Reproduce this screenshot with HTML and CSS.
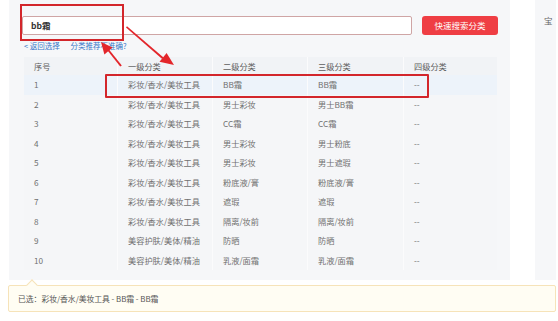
FILE: index.html
```html
<!DOCTYPE html>
<html lang="zh">
<head>
<meta charset="utf-8">
<link rel="stylesheet" href="styles.css">
</head>
<body>
<div class="page">
  <div class="top">
    <div class="main">
      <div class="search-row">
        <div class="search-input">bb霜</div>
        <div class="search-btn">快速搜索分类</div>
      </div>
      <div class="links">
        <span class="back">&lt; 返回选择</span>
        <span class="report">分类推荐不准确?</span>
      </div>
      <div class="table">
        <div class="row head"><span>序号</span><span>一级分类</span><span>二级分类</span><span>三级分类</span><span>四级分类</span></div>
        <div class="row active"><span>1</span><span>彩妆/香水/美妆工具</span><span>BB霜</span><span>BB霜</span><span>--</span></div>
        <div class="row"><span>2</span><span>彩妆/香水/美妆工具</span><span>男士彩妆</span><span>男士BB霜</span><span>--</span></div>
        <div class="row"><span>3</span><span>彩妆/香水/美妆工具</span><span>CC霜</span><span>CC霜</span><span>--</span></div>
        <div class="row"><span>4</span><span>彩妆/香水/美妆工具</span><span>男士彩妆</span><span>男士粉底</span><span>--</span></div>
        <div class="row"><span>5</span><span>彩妆/香水/美妆工具</span><span>男士彩妆</span><span>男士遮瑕</span><span>--</span></div>
        <div class="row"><span>6</span><span>彩妆/香水/美妆工具</span><span>粉底液/膏</span><span>粉底液/膏</span><span>--</span></div>
        <div class="row"><span>7</span><span>彩妆/香水/美妆工具</span><span>遮瑕</span><span>遮瑕</span><span>--</span></div>
        <div class="row"><span>8</span><span>彩妆/香水/美妆工具</span><span>隔离/妆前</span><span>隔离/妆前</span><span>--</span></div>
        <div class="row"><span>9</span><span>美容护肤/美体/精油</span><span>防晒</span><span>防晒</span><span>--</span></div>
        <div class="row"><span>10</span><span>美容护肤/美体/精油</span><span>乳液/面霜</span><span>乳液/面霜</span><span>--</span></div>
      </div>
    </div>
    <div class="side"><span class="side-text">宝</span></div>
  </div>
  <div class="selected">已选：彩妆/香水/美妆工具 - BB霜 - BB霜</div>

  <div class="mark mark-input"></div>
  <div class="mark mark-row"></div>
  <svg class="arrows" width="558" height="321" viewBox="0 0 558 321">
    <polygon points="127,26.2 163.5,57.5 162.2,59 126,27.6" fill="#e3262b"/>
    <polygon points="174,65 159.5,61.8 166.6,53" fill="#e3262b"/>
    <polygon points="120.2,66.6 107.5,50.5 109,49.4 121.8,65.4" fill="#e3262b"/>
    <polygon points="101,42 112.6,47.6 104.4,54.4" fill="#e3262b"/>
  </svg>
</div>
</body>
</html>
```

FILE: styles.css
```css
* { box-sizing: border-box; }
html, body { margin: 0; padding: 0; background: #ffffff; }
body {
  font-family: "Noto Sans CJK SC", "Noto Sans", sans-serif;
  font-size: 8.2px;
  color: #707070;
  width: 558px;
  height: 321px;
  overflow: hidden;
}
.page { position: relative; width: 558px; height: 321px; }
.top { display: flex; height: 280px; padding-left: 9px; }
.main {
  width: 501px;
  height: 280px;
  background: #f6f7f9;
  padding: 16px 0 0 13px;
}
.search-row { display: flex; align-items: center; gap: 10px; height: 19px; }
.search-input {
  width: 390px;
  height: 19px;
  background: #fff;
  border: 1px solid #cfa5a5;
  border-radius: 2px;
  padding-left: 8px;
  font-size: 8.5px;
  font-weight: bold;
  color: #333;
  line-height: 17px;
}
.search-btn {
  width: 76px;
  height: 19px;
  background: #ef3e44;
  border-radius: 3px;
  color: #fff;
  font-size: 8.5px;
  line-height: 19px;
  text-align: center;
}
.links {
  height: 22px;
  line-height: 22px;
  padding-left: 2px;
  font-size: 7.5px;
  color: #3a78c8;
}
.back { margin-right: 9px; }
.table { width: 473px; margin-left: 2px; background: #f5f6f8; }
.row {
  display: grid;
  grid-template-columns: 93px 95px 95px 96px 94px;
  height: 19.5px;
  line-height: 19.5px;
}
.row span { padding-left: 10px; border-left: 1px solid #fbfbfc; white-space: nowrap; }
.row span:first-child { border-left: none; }
.row.head { height: 18px; line-height: 18px; background: #f1f3f6; color: #5e5e5e; }
.row.active { background: #edf3fa; }
.side {
  margin-left: 25px;
  width: 21px;
  height: 280px;
  background: #f6f7f9;
  padding: 14px 0 0 9px;
  color: #666;
  font-size: 8.5px;
}
.side-text { white-space: nowrap; }
.selected {
  position: relative;
  margin: 5px 2px 0 8px;
  height: 27px;
  background: #fffdf3;
  border: 1px solid #f6e3b9;
  border-radius: 2px;
  padding-left: 9px;
  line-height: 25px;
  font-size: 7.8px;
  color: #555;
}
.selected::before {
  content: "";
  position: absolute;
  left: 19px;
  top: -5px;
  width: 7px;
  height: 7px;
  background: #fffdf3;
  border-left: 1px solid #f6e3b9;
  border-top: 1px solid #f6e3b9;
  transform: rotate(45deg);
}
.mark { position: absolute; border: 2px solid #d3262b; }
.mark-input { left: 20px; top: 4px; width: 104px; height: 37px; }
.mark-row { left: 105px; top: 74px; width: 324px; height: 24px; border-radius: 1px; }
.arrows { position: absolute; left: 0; top: 0; pointer-events: none; }
```
